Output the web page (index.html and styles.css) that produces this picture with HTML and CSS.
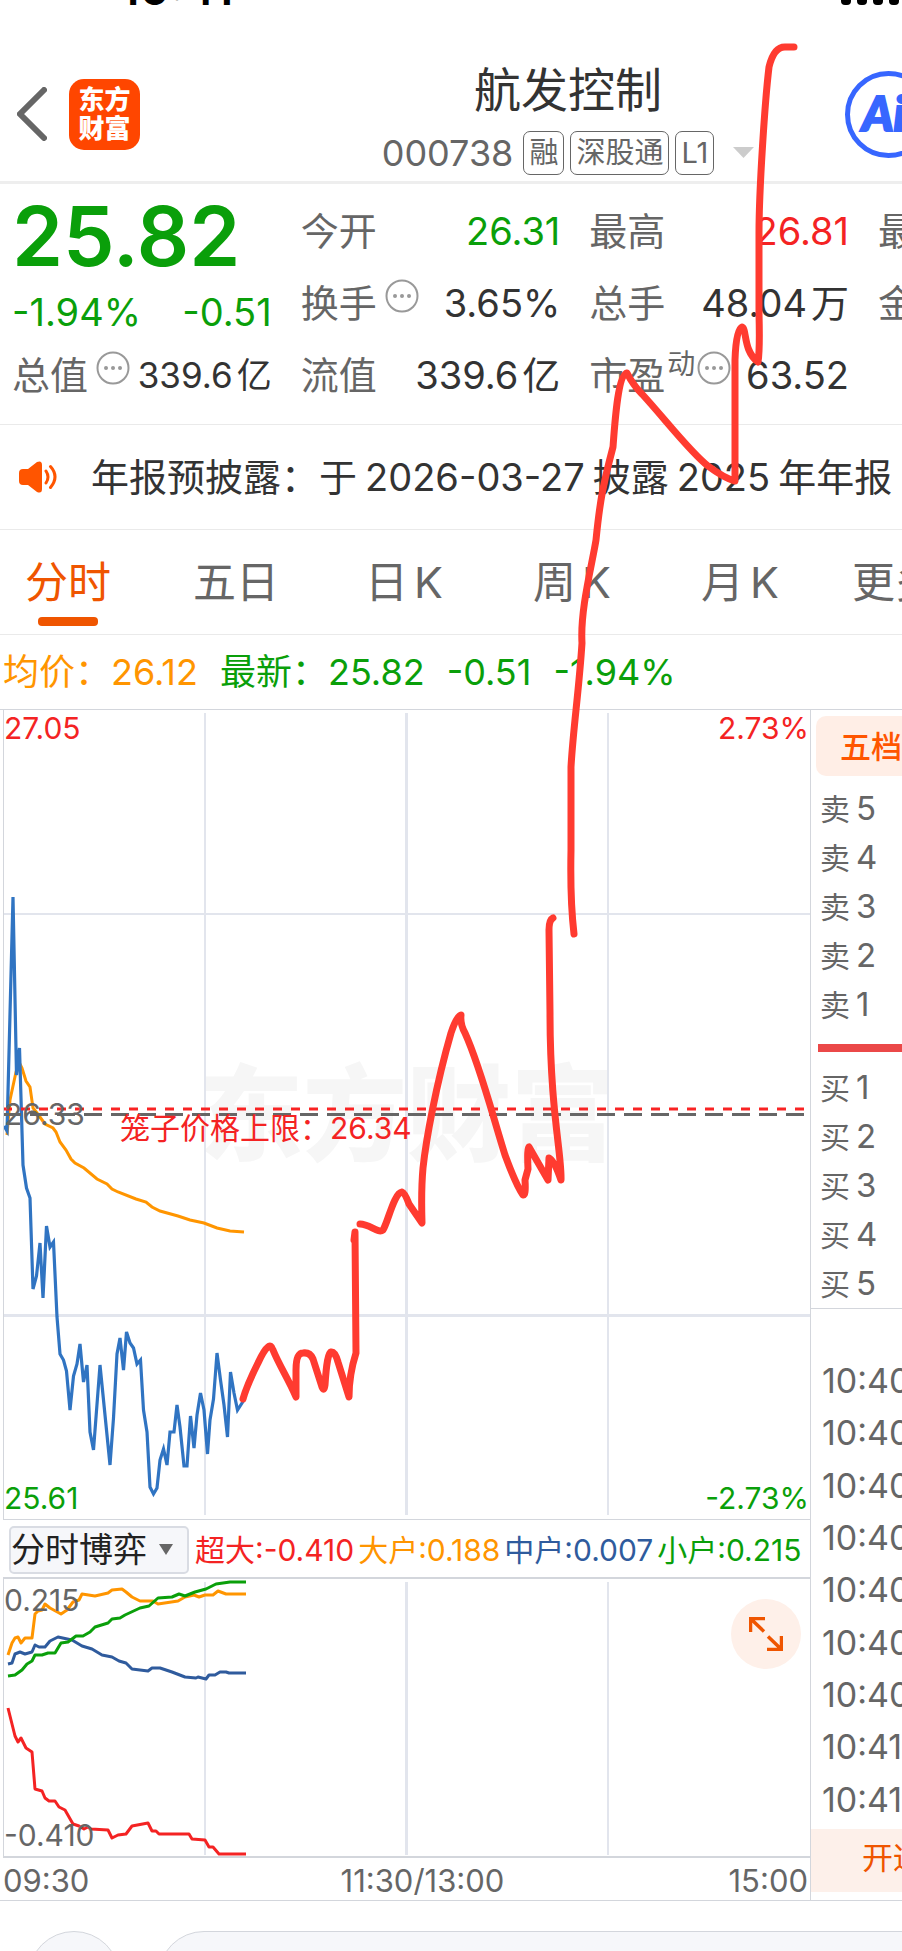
FILE: index.html
```html
<!DOCTYPE html>
<html lang="zh-CN">
<head>
<meta charset="utf-8">
<meta name="viewport" content="width=device-width, initial-scale=1">
<title>航发控制 000738</title>
<link rel="stylesheet" href="styles.css">
</head>
<body>
<div class="app">
  <div class="status">
    <span class="status-time">10:41</span>
    <span class="signal"><i></i><i></i><i></i><i></i></span>
  </div>

  <header class="header">
    <div class="header-left">
      <button class="plain" aria-label="返回">
        <svg width="30" height="54" viewBox="0 0 30 54"><path d="M27 3 3 27l24 24" fill="none" stroke="#666" stroke-width="6" stroke-linecap="round"/></svg>
      </button>
      <div class="logo"><span>东方</span><span>财富</span></div>
    </div>
    <div class="header-title">
      <h1>航发控制</h1>
      <div class="code-row">
        <span class="code">000738</span>
        <span class="tag">融</span>
        <span class="tag">深股通</span>
        <span class="tag">L1</span>
        <svg class="caret" width="21" height="11" viewBox="0 0 21 11"><path d="M0 0h21L10.500 11z" fill="#ccc"/></svg>
      </div>
    </div>
    <button class="ai">Ai</button>
  </header>

  <section class="quote">
    <div class="col">
      <div class="price">25.82</div>
      <div class="cell green"><span>-1.94%</span><span>-0.51</span></div>
      <div class="cell small-cell"><span class="label">总值<svg class="dots" viewBox="0 0 34 34"><circle cx="17" cy="17" r="15.500"/><path d="M10 17h.01M17 17h.01M24 17h.01"/></svg></span><span class="val">339.6<b>亿</b></span></div>
    </div>
    <div class="col">
      <div class="cell"><span class="label">今开</span><span class="green">26.31</span></div>
      <div class="cell"><span class="label">换手<svg class="dots" viewBox="0 0 34 34"><circle cx="17" cy="17" r="15.500"/><path d="M10 17h.01M17 17h.01M24 17h.01"/></svg></span><span>3.65%</span></div>
      <div class="cell"><span class="label">流值</span><span class="val">339.6<b>亿</b></span></div>
    </div>
    <div class="col">
      <div class="cell"><span class="label">最高</span><span class="red">26.81</span></div>
      <div class="cell"><span class="label">总手</span><span class="val">48.04<b>万</b></span></div>
      <div class="cell"><span class="label">市盈<sup>动</sup><svg class="dots tight" viewBox="0 0 34 34"><circle cx="17" cy="17" r="15.500"/><path d="M10 17h.01M17 17h.01M24 17h.01"/></svg></span><span>63.52</span></div>
    </div>
    <div class="col">
      <div class="cell"><span class="label">最低</span></div>
      <div class="cell"><span class="label">金额</span></div>
    </div>
  </section>

  <a class="news" href="#news">
    <svg width="38" height="32" viewBox="0 0 38 32"><path d="M0 12q0-4 4-4h5L18 1q5-2 5 3v24q0 5-5 3L9 24H4q-4 0-4-4z" fill="#ff5500"/><path d="M27 10q4 6 0 12M31.500 5.500q9 10 0 21" fill="none" stroke="#ff5500" stroke-width="3" stroke-linecap="round"/></svg>
    <span class="news-text"><span>年报预披露：于</span><span>2026-03-27</span><span>披露</span><span>2025</span><span>年年报</span></span>
  </a>

  <nav class="tabs">
    <button class="tab active">分时</button>
    <button class="tab">五日</button>
    <button class="tab">日<span>K</span></button>
    <button class="tab">周<span>K</span></button>
    <button class="tab">月<span>K</span></button>
    <button class="tab">更多<svg width="20" height="11" viewBox="0 0 20 11"><path d="M0 0h20L10 11z" fill="#ccc"/></svg></button>
  </nav>

  <div class="summary">
    <span class="orange">均价：<span>26.12</span></span>
    <span class="green">最新：<span>25.82</span></span>
    <span class="green">-0.51</span>
    <span class="green">-1.94%</span>
  </div>

  <main class="board">
    <div class="charts">
      <div class="chart">
        <div class="watermark">东方财富</div>
        <svg class="plot" viewBox="4 710 806 809">
          <g stroke="#e2e5ed" stroke-width="2">
            <path d="M205 713V1515M608 713V1515M4 914H810"/>
            <path d="M406.500 713V1515M4 1315.500H810" stroke-width="3"/>
          </g>
          <path d="M7 1135 10 1100 16 1072 19 1062 22 1068 26 1081 30 1087 33 1108 37 1113 45 1124 53 1128 56 1132 60 1142 66 1150 71 1159 75 1163 84 1168 97 1179 107 1184 112 1189 118 1192 136 1199 146 1202 152 1207 160 1211 178 1216 190 1220 204 1223 217 1228 230 1231 244 1232" fill="none" stroke="#ff9500" stroke-width="3"/>
          <path d="M4 1126 7 1131 13 897 16.500 1075 19.500 1048 23 1165 26.500 1188 30 1198 33 1289 36.500 1276 40 1243 43 1298 46.500 1226 50 1247 53.500 1242 57 1317 60 1354 63.500 1360 66.500 1371 70 1410 73.500 1376 77 1364 80 1344 83.500 1382 87 1365 90 1432 93.500 1450 100 1365 110 1465 113.500 1418 117 1354 120 1338 123.500 1370 126.500 1332 130 1343 133.500 1348 137 1364 140.500 1360 143.500 1410 147 1432 150 1487 153.500 1494 157 1488 160 1460 163.500 1449 167 1465 170 1432 174 1432 177 1405 180 1427 184 1466 187 1466 190.500 1416 194 1448 197 1415 200.500 1393 204 1410 207.500 1454 210 1420 213.500 1399 217 1353 220.500 1380 224 1405 227.500 1437 230.500 1372 234 1393 237.500 1410 244 1400" fill="none" stroke="#3074c2" stroke-width="3.200"/>
          <path d="M3 1114.500H804" stroke="#666" stroke-width="3" stroke-dasharray="18 9"/>
          <path d="M3 1109H804" stroke="#f92323" stroke-width="3" stroke-dasharray="9 9"/>
        </svg>
        <span class="mark top left red">27.05</span>
        <span class="mark top right red">2.73%</span>
        <span class="mark middle left gray">26.33</span>
        <span class="mark limit red">笼子价格上限：26.34</span>
        <span class="mark bottom left green">25.61</span>
        <span class="mark bottom right green">-2.73%</span>
      </div>
      <div class="toolbar">
        <div class="picker">
          <select aria-label="指标"><option>分时博弈</option></select>
          <svg width="14" height="11" viewBox="0 0 14 11"><path d="M0 0h14L7 11z" fill="#666"/></svg>
        </div>
        <span class="red">超大:-0.410</span>
        <span class="orange">大户:0.188</span>
        <span class="blue">中户:0.007</span>
        <span class="green">小户:0.215</span>
      </div>
      <div class="chart flow">
        <svg class="plot" viewBox="4 1579 806 277">
          <path d="M205 1582V1855M608 1582V1855" stroke="#e2e5ed" stroke-width="2"/>
          <path d="M406.500 1582V1855" stroke="#e2e5ed" stroke-width="3"/>
          <g fill="none" stroke-width="3" stroke-linejoin="round">
            <path stroke="#2f5b9d" d="M8 1664 12 1663 15 1654 20 1652 25 1654 32 1652 35 1645 39 1647 45 1647 50 1641 58 1637 72 1640 82 1646 92 1649 102 1655 112 1657 119 1661 126 1663 132 1669 148 1671 152 1668 160 1668 172 1672 185 1677 196 1678 198 1677 206 1679 209 1675 215 1675 220 1672 226 1672 229 1673H246"/>
            <path stroke="#ff9500" d="M8 1655 12 1643 15 1638 18 1637 21 1643 25 1638 32 1638 35 1614 38 1611 42 1610 45 1604 50 1608 61 1614 67 1610 73 1602 79 1600 82 1594 95 1596 108 1593 112 1590 122 1589 126 1592 132 1597 140 1601 153 1601 158 1604 178 1601 185 1597 194 1595 199 1597 205 1595 213 1595 218 1591 226 1594H246"/>
            <path stroke="#0a9f0a" d="M8 1676 15 1675 22 1670 27 1664 32 1661 35 1655 42 1655 48 1653 55 1653 61 1643 68 1642 76 1636 83 1636 90 1632 95 1627 108 1623 112 1619 120 1618 125 1615 140 1608 149 1606 158 1598 172 1597 179 1594 185 1596 195 1592 206 1589 216 1584 230 1582H246"/>
            <path stroke="#f42323" d="M8 1708 12 1724 15 1736 18 1742 21 1738 26 1748 32 1752 35 1789 42 1791 45 1798 49 1801 55 1801 59 1807 65 1810 73 1824 79 1826 84 1829 88 1827 91 1829 108 1830 112 1838 118 1835 126 1834 132 1826 148 1823 152 1831 156 1831 159 1834 189 1834 192 1839 205 1840 209 1847 213 1847 219 1854H246"/>
          </g>
        </svg>
        <span class="mark top left gray">0.215</span>
        <span class="mark bottom left gray">-0.410</span>
        <button class="expand" aria-label="展开">
          <svg width="34" height="34" viewBox="0 0 34 34"><path d="M1.500 15V1.500H16M2 2l13 12.500M32.500 19v13.500H18M32 32 19 19.500" fill="none" stroke="#ef5500" stroke-width="3.500"/></svg>
        </button>
      </div>
      <div class="axis"><span>09:30</span><span>11:30/13:00</span><span>15:00</span></div>
    </div>

    <aside class="book">
      <button class="book-tab">五档</button>
      <ul class="levels">
        <li>卖<span>5</span></li><li>卖<span>4</span></li><li>卖<span>3</span></li><li>卖<span>2</span></li><li>卖<span>1</span></li>
      </ul>
      <div class="ratio"></div>
      <ul class="levels">
        <li>买<span>1</span></li><li>买<span>2</span></li><li>买<span>3</span></li><li>买<span>4</span></li><li>买<span>5</span></li>
      </ul>
      <ul class="ticks">
        <li>10:40</li><li>10:40</li><li>10:40</li><li>10:40</li><li>10:40</li><li>10:40</li><li>10:40</li><li>10:41</li><li>10:41</li>
      </ul>
      <button class="open">开通</button>
    </aside>
  </main>

  <footer class="footer">
    <button class="round" aria-label="菜单"></button>
    <input class="comment" type="text" aria-label="评论">
  </footer>

  <svg class="drawing" viewBox="0 0 902 1951" aria-hidden="true">
    <path d="M243 1399C246 1388 252 1375 258 1363Q264 1350 268 1347Q271 1344 273 1350C280 1367 288 1378 296 1397Q296 1385 296 1370Q296 1353 303 1353Q310 1352 313 1359L322 1387Q324 1392 325 1385Q327 1353 331 1352Q335 1351 338 1362L349 1397Q349 1375 356 1353L355 1232L354 1240"/>
    <path d="M360 1224C370 1224 378 1234 383 1230C388 1222 394 1193 402 1192Q405 1193 409 1204L422 1223Q421 1190 423 1168C426 1140 436 1085 451 1033Q457 1015 461 1015Q460 1024 465 1033C480 1066 491 1110 505 1155Q516 1185 523 1195Q526 1196 525 1180L528 1169Q527 1148 529 1147L548 1180L549 1158Q554 1160 561 1180C562 1155 550 1110 550 1013L549 930Q549 920 553 918"/>
    <path d="M574 934Q570 900 571 850V767C573 730 579 690 582 643C580 610 592 565 596 540C600 500 603 485 613 447C615 420 618 375 627 373Q633 385 642 394C665 419 690 452 708 466Q724 478 735 481V360Q736 329 742 327C747 329 743 351 758 362Q760 350 759 313V233C759 190 765 100 769 67Q774 46 786 47H794"/>
  </svg>
</div>
</body>
</html>
```
FILE: styles.css
```css
* { box-sizing: border-box; }
body {
  margin: 0;
  background: #fff;
  color: #333;
  font-family: Inter, "Noto Sans CJK SC", sans-serif;
  font-size: 38px;
  line-height: 1;
}
button, input, select { font: inherit; color: inherit; border: 0; padding: 0; margin: 0; background: none; }
h1, ul { margin: 0; padding: 0; font-weight: 400; list-style: none; }
svg { display: block; flex: none; }
.green { color: #0a9f0a; }
.red { color: #f42323; }
.orange { color: #ff9500; }
.blue { color: #2f5b9d; }
.gray { color: #666; }

.app { position: relative; overflow: hidden; }
.drawing { position: absolute; top: 0; left: 0; width: 100%; pointer-events: none; fill: none; stroke: #ff3b30; stroke-width: 7; stroke-linecap: round; stroke-linejoin: round; }

.status { display: flex; justify-content: space-between; align-items: flex-end; height: 6px; padding: 0 3px 0 120px; overflow: hidden; color: #000; }
.status-time { font-size: 46px; font-weight: 600; line-height: 36px; }
.signal { display: flex; gap: 6px; padding-bottom: 1px; }
.signal i { width: 10px; height: 20px; border-radius: 4px; background: #000; }

.header { display: flex; align-items: center; height: 178px; padding: 41px 0 0 17px; border-bottom: 3px solid #eee; }
.header-left { display: flex; align-items: center; gap: 22px; width: 274px; }
.logo { display: flex; flex-direction: column; justify-content: center; gap: 3px; width: 71px; height: 71px; border-radius: 15px; background: #ff4600; color: #fff; font-size: 26px; font-weight: 900; text-align: center; }
.header-title { flex: 1; display: flex; flex-direction: column; align-items: center; gap: 18px; padding-top: 12px; }
.header-title h1 { font-size: 47px; }
.code-row { display: flex; align-items: center; gap: 6px; color: #666; font-size: 36px; }
.code { margin-right: 4px; }
.tag { display: flex; align-items: center; height: 44px; padding: 0 5px; border: 1px solid #666; border-radius: 7px; font-size: 29px; }
.caret { margin-left: 13px; }
.ai { flex: none; width: 87px; height: 87px; margin-right: -30px; border: 5px solid #3766ff; border-radius: 50%; color: #3766ff; font-family: Lato, Inter, sans-serif; font-size: 48px; font-style: italic; font-weight: 900; text-align: left; padding: 0 0 2px 12px; -webkit-text-stroke: 2px #3766ff; }

.quote { display: grid; grid-template-columns: repeat(3, minmax(0, 1fr)) 24px; gap: 29px; height: 241px; padding: 11px 0 0 12px; border-bottom: 1px solid #eaeaea; }
.col { display: flex; flex-direction: column; }
.cell { display: flex; align-items: center; justify-content: space-between; height: 72px; white-space: nowrap; }
.label { display: flex; align-items: center; color: #666; }
.val { display: flex; align-items: center; gap: 4px; }
.val b { font-weight: 400; }
.small-cell .val { font-size: 35px; gap: 4px; }
.price { height: 80px; font-size: 82px; font-weight: 600; line-height: 84px; color: #0a9f0a; }
.price + .cell { height: 64px; padding-top: 9px; }
.dots { width: 34px; height: 34px; margin: 0 0 14px 8px; fill: none; stroke: #999; stroke-width: 2; }
.dots path { stroke-width: 4; stroke-linecap: round; }
.dots.tight { margin-left: 2px; }
.label sup { margin-bottom: 22px; padding-left: 2px; font-size: 28px; line-height: 1; }

.news { display: flex; align-items: center; gap: 34px; height: 105px; padding-left: 19px; border-bottom: 1px solid #eaeaea; color: #333; font-size: 38px; text-decoration: none; white-space: nowrap; }
.news-text { display: flex; gap: 8px; }

.tabs { display: grid; grid-template-columns: repeat(6, minmax(0, 1fr)); margin: 0 -90px 0 -16px; height: 105px; border-bottom: 1px solid #eaeaea; color: #666; font-size: 43px; white-space: nowrap; }
.tab { position: relative; display: flex; align-items: center; justify-content: center; gap: 6px; }
.tab.active { color: #ef5500; }
.tab.active::after { content: ""; position: absolute; left: 50%; bottom: 8px; width: 60px; height: 9px; margin-left: -30px; border-radius: 4px; background: #ef5500; }

.summary { display: flex; align-items: center; gap: 22px; height: 74px; padding-left: 3px; font-size: 36px; white-space: nowrap; }

.board { display: grid; grid-template-columns: minmax(0, 1fr) 91px; border-top: 1px solid #d3d6dc; border-bottom: 1px solid #d3d6dc; }
.charts { padding-left: 3px; border-right: 1px solid #d3d6dc; }
.chart { position: relative; border-left: 1px solid #d3d6dc; border-bottom: 1px solid #d3d6dc; font-size: 30px; }
.plot { position: relative; width: 100%; height: auto; }
.watermark { position: absolute; left: 0; right: 0; top: 50%; margin-top: -52px; color: #f6f6f6; font-size: 104px; font-weight: 900; text-align: center; }
.mark { position: absolute; }
.mark.top { top: 3px; }
.mark.bottom { bottom: 6px; }
.mark.middle { top: 50%; margin-top: -16px; }
.mark.left { left: 0; }
.mark.right { right: 1px; }
.mark.limit { left: 116px; top: 50%; margin-top: -2px; }
.toolbar { display: flex; align-items: center; gap: 4px; height: 57px; padding: 2px 0 0 6px; font-size: 30px; white-space: nowrap; }
.picker { position: relative; width: 180px; height: 48px; margin-right: 2px; border: 2px solid #d9dce3; border-radius: 5px; background: #f6f7fa; }
.picker select { width: 100%; height: 100%; appearance: none; color: #222; font-size: 34px; line-height: 44px; }
.picker svg { position: absolute; right: 14px; top: 16px; }
.flow { border-top: 2px solid #d3d6dc; border-bottom-width: 2px; }
.flow .mark.top { top: 6px; }
.expand { position: absolute; top: 20px; right: 9px; display: flex; align-items: center; justify-content: center; width: 70px; height: 70px; border-radius: 50%; background: #fef0e9; }
.axis { display: grid; grid-template-columns: 1fr auto 1fr; align-items: center; height: 42px; padding: 2px 2px 0 0; color: #666; font-size: 31px; }
.axis span:nth-child(2) { padding-left: 34px; }
.axis span:last-child { text-align: right; }

.book { display: flex; flex-direction: column; overflow: hidden; color: #666; white-space: nowrap; }
.book-tab { flex: none; height: 60px; margin: 6px 0 8px 5px; padding-left: 24px; border-radius: 10px 0 0 10px; background: #ffeee6; color: #ff5500; font-size: 31px; font-weight: 500; text-align: left; }
.levels { padding-left: 9px; font-size: 30px; }
.levels li { display: flex; align-items: center; gap: 6px; height: 49px; }
.levels span { font-size: 33px; }
.ratio { height: 8px; margin: 15px 0 11px 7px; background: #eb4848; }
.ticks { flex: 1; display: flex; flex-direction: column; padding: 46px 0 3px 11px; border-top: 1px solid #d3d6dc; font-size: 34px; }
.ticks li { flex: 1; display: flex; align-items: center; }
.open { height: 63px; margin-bottom: 8px; padding: 0 0 6px 51px; background: #fdf0ea; color: #ef5500; font-size: 31px; text-align: left; }

.footer { display: flex; gap: 38px; height: 50px; padding: 30px 0 0 28px; overflow: hidden; }
.round { flex: none; width: 92px; height: 92px; border: 1px solid #d3d6dc; border-radius: 50%; background: #f6f7fa; }
.comment { flex: 1; height: 92px; margin-right: -60px; border: 1px solid #d3d6dc; border-radius: 46px; background: #f6f7fa; }
```
